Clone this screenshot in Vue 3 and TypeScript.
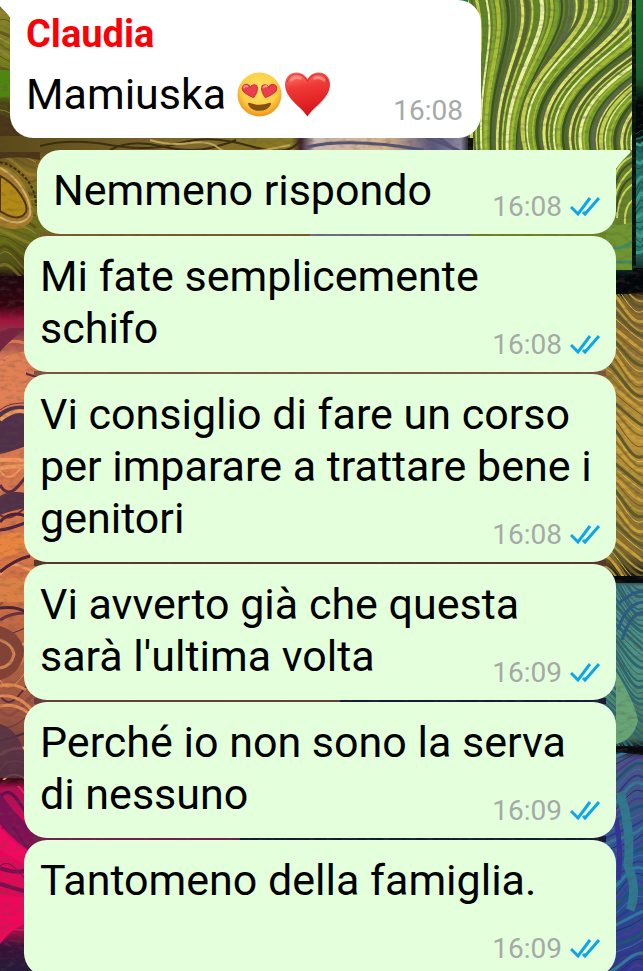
<script setup lang="ts">
interface Message {
  id: number
  text: string
  time: string
  first?: boolean
  long?: boolean
}

interface Stroke {
  d: string
  color: string
  width: number
}

const messages: Message[] = [
  { id: 1, text: 'Nemmeno rispondo', time: '16:08', first: true },
  { id: 2, text: 'Mi fate semplicemente schifo', time: '16:08' },
  { id: 3, text: 'Vi consiglio di fare un corso per imparare a trattare bene i genitori', time: '16:08' },
  { id: 4, text: "Vi avverto già che questa sarà l'ultima volta", time: '16:09' },
  { id: 5, text: 'Perché io non sono la serva di nessuno', time: '16:09' },
  { id: 6, text: 'Tantomeno della famiglia.', time: '16:09', long: true },
]

// Lines of the marbled paper that fan out from the top edge.
function fan(): Stroke[] {
  const colors = ['#4f6a2c', '#a9bd35', '#5d8426', '#dfe66a', '#3c5122', '#7fa22c', '#c6d050', '#5b6b4a', '#76a02b', '#eef0a0', '#54662f']
  const lines: Stroke[] = []
  for (let i = 0; i < 90; i++) {
    const top = 455 + i * 5
    const end = Math.round(474 + (top - 480) * 0.46)
    const pull = i > 24 ? 34 : 10
    lines.push({
      d: `M${top} -6C${top + 14} 42 ${end - pull + 10} 74 ${end + 6} 158`,
      color: colors[(i * 7) % colors.length],
      width: 2 + (i % 3),
    })
  }
  return lines
}

// Wavy veins that cross a block of paper from side to side.
function veins(x: number, y: number, w: number, h: number, step: number, slope: number, colors: string[]): Stroke[] {
  const lines: Stroke[] = []
  let i = 0
  for (let at = -Math.abs(slope); at < h + Math.abs(slope); at += step) {
    const a = y + at
    const bend = Math.round(Math.sin(i * 0.45) * step * 2)
    lines.push({
      d: `M${x} ${a}C${x + w / 3} ${a - bend} ${x + (w * 2) / 3} ${a + bend + slope} ${x + w} ${a + slope}`,
      color: colors[(i * 5) % colors.length],
      width: 1 + (i % 3),
    })
    i++
  }
  return lines
}

const fanLines = fan()
const gold = veins(0, 0, 36, 270, 6, 16, ['#3d3515', '#a08a35', '#5a5a1a', '#c2a850', '#4a3a14', '#6b7a1e'])
const orange = veins(0, 334, 50, 440, 15, -14, ['#4b2440', '#ee9560', '#6a2f42', '#d8794c', '#8e4a45', '#f0a06c', '#5a2a45'])
const magenta = veins(0, 790, 50, 150, 17, 26, ['#8a0a55', '#ff1468', '#5e124f', '#c90762'])
const straw = veins(600, 296, 43, 280, 5, 34, ['#6d5620', '#c9a03a', '#8d702a', '#e2b84c', '#5f5a28', '#b2963e'])
const teal = veins(600, 584, 43, 160, 6, 40, ['#2d6670', '#78b7a0', '#245060', '#5b9c80', '#8fc9b0'])
const blue = veins(600, 752, 43, 220, 7, -22, ['#1f2a6e', '#2f7ba0', '#283a90', '#3a6fae', '#1c5478', '#4338a0'])
const emerald = veins(633, 140, 10, 122, 6, -5, ['#0d4d4a', '#3a9c8c', '#15675c'])
</script>

<template>
  <main class="chat">
    <svg class="wallpaper" viewBox="0 0 643 971" preserveAspectRatio="xMidYMid slice" aria-hidden="true">
      <defs>
        <clipPath id="fan-area"><rect x="468" y="0" width="164" height="240" /></clipPath>
        <clipPath id="gold-area"><rect x="0" y="0" width="300" height="276" /></clipPath>
        <clipPath id="orange-area"><rect x="0" y="328" width="300" height="452" /></clipPath>
        <clipPath id="magenta-area"><rect x="0" y="786" width="300" height="160" /></clipPath>
        <clipPath id="straw-area"><rect x="560" y="294" width="83" height="283" /></clipPath>
        <clipPath id="teal-area"><rect x="560" y="584" width="83" height="162" /></clipPath>
        <clipPath id="blue-area"><rect x="560" y="752" width="83" height="219" /></clipPath>
        <linearGradient id="left-tone" x1="0" y1="0" x2="0" y2="971" gradientUnits="userSpaceOnUse">
          <stop offset="0" stop-color="#8d8030" />
          <stop offset="0.07" stop-color="#77801e" />
          <stop offset="0.09" stop-color="#4f7a10" />
          <stop offset="0.11" stop-color="#4a4512" />
          <stop offset="0.14" stop-color="#52401a" />
          <stop offset="0.18" stop-color="#8a6e20" />
          <stop offset="0.24" stop-color="#6b7018" />
          <stop offset="0.275" stop-color="#4c4a12" />
          <stop offset="0.285" stop-color="#1d0710" />
          <stop offset="0.315" stop-color="#35040f" />
          <stop offset="0.33" stop-color="#a3123f" />
          <stop offset="0.345" stop-color="#8d3a45" />
          <stop offset="0.37" stop-color="#df7d58" />
          <stop offset="0.6" stop-color="#d57245" />
          <stop offset="0.74" stop-color="#9b5440" />
          <stop offset="0.79" stop-color="#5f2d38" />
          <stop offset="0.804" stop-color="#3c0816" />
          <stop offset="0.812" stop-color="#b50b52" />
          <stop offset="0.87" stop-color="#e3085c" />
          <stop offset="0.95" stop-color="#e00850" />
          <stop offset="0.975" stop-color="#3a1038" />
          <stop offset="1" stop-color="#241b38" />
        </linearGradient>
        <linearGradient id="right-tone" x1="0" y1="0" x2="0" y2="971" gradientUnits="userSpaceOnUse">
          <stop offset="0" stop-color="#1b7a30" />
          <stop offset="0.08" stop-color="#14602c" />
          <stop offset="0.105" stop-color="#020807" />
          <stop offset="0.14" stop-color="#020807" />
          <stop offset="0.155" stop-color="#1d6b62" />
          <stop offset="0.25" stop-color="#2f8d7c" />
          <stop offset="0.275" stop-color="#0f3330" />
          <stop offset="0.285" stop-color="#050a0c" />
          <stop offset="0.3" stop-color="#171106" />
          <stop offset="0.31" stop-color="#7a6030" />
          <stop offset="0.45" stop-color="#c09538" />
          <stop offset="0.57" stop-color="#7d6c30" />
          <stop offset="0.596" stop-color="#0b0d0d" />
          <stop offset="0.604" stop-color="#4d8a8a" />
          <stop offset="0.7" stop-color="#4f9480" />
          <stop offset="0.76" stop-color="#427058" />
          <stop offset="0.77" stop-color="#050914" />
          <stop offset="0.782" stop-color="#4a5582" />
          <stop offset="0.9" stop-color="#28549a" />
          <stop offset="1" stop-color="#30348c" />
        </linearGradient>
        <linearGradient id="seam-tone" x1="0" y1="0" x2="1" y2="0">
          <stop offset="0" stop-color="#5b4a18" />
          <stop offset="0.4" stop-color="#7e6a2c" />
          <stop offset="0.62" stop-color="#8a7a20" />
          <stop offset="0.64" stop-color="#3a1c30" />
          <stop offset="0.67" stop-color="#c9b7b0" />
          <stop offset="0.82" stop-color="#d8b48c" />
          <stop offset="0.92" stop-color="#5b5880" />
          <stop offset="0.98" stop-color="#8b86a0" />
          <stop offset="1" stop-color="#111" />
        </linearGradient>
        <filter id="grain" x="0" y="0" width="100%" height="100%">
          <feTurbulence type="fractalNoise" baseFrequency="0.12 0.25" numOctaves="3" seed="8" />
          <feColorMatrix values="0 0 0 0 0.1  0 0 0 0 0.08  0 0 0 0 0.05  0 0 3 0 -1.4" />
        </filter>
      </defs>

      <rect width="330" height="971" fill="url(#left-tone)" />
      <rect x="330" width="313" height="971" fill="url(#right-tone)" />

      <g clip-path="url(#gold-area)" fill="none">
        <path v-for="(s, i) in gold" :key="i" :d="s.d" :stroke="s.color" :stroke-width="s.width" opacity="0.55" />
        <path d="M0 70H14V97H0Z" fill="#4f8610" />
        <path d="M0 114Q22 122 40 146L40 160Q20 155 0 159Z" fill="#4a3518" />
        <path d="M0 166C18 170 33 192 33 218C25 232 10 230 0 226Z" fill="#a67b2b" />
        <path d="M0 176C16 184 29 204 26 212C20 222 8 216 0 211Z" fill="#b38a14" stroke="#4c3410" stroke-width="2" />
        <path d="M0 168C20 178 32 202 30 215C23 227 8 222 0 217" stroke="#d2b468" stroke-width="2" />
        <path d="M0 162C22 168 36 186 36 206" stroke="#3d2b12" stroke-width="2" stroke-dasharray="3 2" />
      </g>

      <g clip-path="url(#orange-area)" fill="none">
        <path v-for="(s, i) in orange" :key="i" :d="s.d" :stroke="s.color" :stroke-width="s.width" />
        <path d="M0 332L24 322V330Q8 342 0 352Z" fill="#762340" />
        <path d="M0 368Q12 350 26 352V396Q12 402 0 404Z" fill="#e28055" />
        <path d="M0 412Q12 404 26 406V446Q10 452 0 454Z" fill="#503049" />
        <path d="M0 420Q14 408 26 412M0 460H26M0 468Q14 465 26 467" stroke="#f09a5e" stroke-width="4" />
        <path d="M0 496Q10 490 26 493V508Q10 511 0 515Z" fill="#513046" />
        <path d="M0 522Q10 510 26 516M0 572Q14 560 30 556M0 608Q16 606 26 612" stroke="#4d2134" stroke-width="3" />
        <path d="M0 536Q14 530 26 534V550Q10 556 0 558Z" fill="#ea8540" />
        <path d="M0 578H26V602H0Z" fill="#dc8145" />
        <path d="M0 626Q20 632 24 650Q22 674 0 680Z" fill="#844236" />
        <path d="M0 640Q12 644 14 654Q12 666 0 668" stroke="#d28150" stroke-width="3" />
        <path d="M0 686Q14 682 26 690M0 696Q18 694 32 710M0 706Q22 702 36 722" stroke="#e28a50" stroke-width="3" />
        <path d="M0 724Q20 730 26 760V778H0Z" fill="#563145" opacity="0.85" />
      </g>

      <g clip-path="url(#magenta-area)" fill="none">
        <path v-for="(s, i) in magenta" :key="i" :d="s.d" :stroke="s.color" :stroke-width="s.width" />
        <path d="M0 792Q12 812 40 836V858Q14 842 0 824Z" fill="#6a1254" opacity="0.8" />
        <path d="M0 826Q14 846 28 850V866Q10 856 0 850Z" fill="#f3085f" />
        <path d="M0 868Q16 874 28 870M0 884Q12 888 28 892" stroke="#79104d" stroke-width="4" />
        <path d="M0 894Q16 898 28 896V922Q10 930 0 944Z" fill="#ee075a" />
      </g>

      <rect x="0" y="136" width="470" height="16" fill="url(#seam-tone)" />
      <path
        d="M40 146Q70 138 110 145T180 143T250 146T300 140M110 150Q130 139 160 146T210 148T236 140"
        fill="none" stroke="#3b2d12" stroke-width="2"
      />
      <path d="M150 140Q170 146 190 143T220 149T290 145" fill="none" stroke="#c0a65a" stroke-width="2" />
      <path d="M306 147Q350 137 424 150M426 138Q444 144 460 151M438 137L454 149" fill="none" stroke="#545478" stroke-width="3" />

      <g clip-path="url(#fan-area)" fill="none">
        <rect x="468" width="164" height="240" fill="#64802c" />
        <path v-for="(s, i) in fanLines" :key="i" :d="s.d" :stroke="s.color" :stroke-width="s.width" />
        <path d="M466 138H473V150H466Z" fill="#0c0e0a" />
        <path d="M632 150Q614 158 612 240H632Z" fill="#65812a" />
        <path d="M633 156Q614 164 612 190M633 168Q618 180 614 200M633 184Q618 194 617 218M633 200Q624 206 625 224" stroke="#cbd65a" stroke-width="2" />
        <path d="M633 162Q616 170 613 196M633 177Q618 184 616 212" stroke="#3e5120" stroke-width="2" />
      </g>
      <path d="M600 222Q618 228 632 222V270H600Z" fill="#6f9630" />
      <path d="M608 248Q622 250 632 242M604 262H634" fill="none" stroke="#3f8d66" stroke-width="3" />

      <g fill="none">
        <path v-for="(s, i) in emerald" :key="i" :d="s.d" :stroke="s.color" :stroke-width="s.width" />
        <path d="M634 0V266" stroke="#06130b" stroke-width="4" />
        <path d="M630 0V40" stroke="#c5d879" stroke-width="1" />
      </g>
      <path d="M616 284Q632 278 634 268H643V292Q628 292 616 298Z" fill="#03060a" />

      <g clip-path="url(#straw-area)" fill="none">
        <path v-for="(s, i) in straw" :key="i" :d="s.d" :stroke="s.color" :stroke-width="s.width" />
      </g>
      <g clip-path="url(#teal-area)" fill="none">
        <path v-for="(s, i) in teal" :key="i" :d="s.d" :stroke="s.color" :stroke-width="s.width" />
        <path d="M616 672Q634 700 638 720Q634 740 616 744Z" fill="#67a577" />
        <path d="M618 604Q634 590 643 592M618 630Q626 604 643 602M622 640Q630 614 643 612" stroke="#2b5b85" stroke-width="3" />
      </g>
      <g clip-path="url(#blue-area)" fill="none">
        <path v-for="(s, i) in blue" :key="i" :d="s.d" :stroke="s.color" :stroke-width="s.width" />
        <path d="M620 792Q632 830 628 866Q638 890 630 910" stroke="#2f7890" stroke-width="9" />
        <path d="M616 818Q622 850 618 880" stroke="#32309a" stroke-width="5" />
      </g>
      <path d="M600 576H643V583H600ZM600 745L643 748V755L600 750Z" fill="#06090d" />

      <path d="M40 232H310V239H40Z" fill="#7d5a28" />
      <path d="M310 232H470V239H310Z" fill="#6f6a86" />
      <path d="M470 232H606V239H470Z" fill="#6f8426" />
      <path d="M34 371H606V376H34Z" fill="#7d5540" />
      <path d="M34 560H606V566H34Z" fill="#59352d" />
      <path d="M34 698H340V704H34Z" fill="#693c3e" />
      <path d="M340 698H606V704H340ZM240 836H606V842H240Z" fill="#181a35" />
      <path d="M34 836H240V842H34Z" fill="#70204b" />
      <rect width="643" height="971" filter="url(#grain)" opacity="0.3" />
    </svg>

    <article class="bubble received">
      <svg class="tail tail-left" viewBox="0 0 16 20" aria-hidden="true"><path d="M0 3Q0 0 3 0H16V20Q9 10 0 3Z" fill="#fff" /></svg>
      <h2 class="sender">Claudia</h2>
      <p class="text">
        Mamiuska
        <span class="emojis">
          <svg class="emoji" viewBox="0 0 44 44" role="img" aria-label="Faccina con occhi a cuore">
            <defs>
              <radialGradient id="face" cx="0.5" cy="0.38" r="0.62">
                <stop offset="0" stop-color="#ffe568" />
                <stop offset="0.65" stop-color="#fdce45" />
                <stop offset="1" stop-color="#ec9418" />
              </radialGradient>
            </defs>
            <circle cx="22" cy="22" r="21.5" fill="url(#face)" />
            <path d="M12 30Q22 34 32 30Q34 30 33 32Q30 38 22 38Q14 38 11 32Q10 30 12 30Z" fill="#83500e" />
            <path d="M16 25C11 23 5 20 5 16C6 11 11 11 13 15C15 11 20 12 20 16C20 19 18 23 16 25Z" fill="#e9404b" stroke="#d5343f" stroke-width="1" />
            <path d="M28 25C26 23 24 19 24 16C24 12 29 11 31 15C33 11 38 11 39 16C39 20 33 23 28 25Z" fill="#e9404b" stroke="#d5343f" stroke-width="1" />
            <path d="M7 15Q8 13 10 14M26 15Q27 13 29 14" fill="none" stroke="#ff9a94" stroke-width="2" stroke-linecap="round" />
          </svg>
          <svg class="emoji" viewBox="0 0 44 44" role="img" aria-label="Cuore rosso">
            <defs>
              <linearGradient id="heart" x1="0.4" y1="0" x2="0.6" y2="1">
                <stop offset="0" stop-color="#ff7468" />
                <stop offset="0.3" stop-color="#f03a37" />
                <stop offset="1" stop-color="#d41116" />
              </linearGradient>
            </defs>
            <path d="M22 43.500C16 34 0 26 0 12C0 5 5 0.500 11 0.500C16 0.500 20 3 22 7C24 3 28 0.500 33 0.500C39 0.500 44 5 44 12C44 26 28 34 22 43.500Z" fill="url(#heart)" />
            <path d="M2 10Q4 2 11 2Q18 2 22 9Q26 2 33 2Q40 2 42 10" fill="none" stroke="#c9242b" stroke-width="1" opacity="0.7" />
            <path d="M6 8Q10 4 15 6M29 6Q34 4 38 8" fill="none" stroke="#ff9d92" stroke-width="3" stroke-linecap="round" opacity="0.7" />
          </svg>
        </span>
      </p>
      <footer class="meta"><time>16:08</time></footer>
    </article>

    <article v-for="m in messages" :key="m.id" class="bubble sent" :class="{ first: m.first, long: m.long }">
      <svg v-if="m.first" class="tail tail-right" viewBox="0 0 16 20" aria-hidden="true"><path d="M0 0H13Q17 0 15 3Q7 10 0 20Z" fill="#e4ffdb" /></svg>
      <p class="text">{{ m.text }}</p>
      <footer class="meta">
        <time>{{ m.time }}</time>
        <svg class="ticks" viewBox="0 0 30 20" role="img" aria-label="Letto">
          <path d="M1 10L8 17L20 1M13 15L15 17L29 1" fill="none" stroke="#0fa5e6" stroke-width="3" />
        </svg>
      </footer>
    </article>
  </main>
</template>

<style>
body {
  margin: 0;
}
</style>

<style scoped>
.chat {
  position: relative;
  display: flex;
  flex-direction: column;
  gap: 2px;
  box-sizing: border-box;
  height: 100vh;
  padding: 0 27px 0 10px;
  overflow: hidden;
  font-family: Roboto, "Liberation Sans", sans-serif;
  color: #000;
}

.wallpaper {
  position: absolute;
  inset: 0;
  width: 100%;
  height: 100%;
}

.bubble {
  position: relative;
  flex: none;
  box-sizing: border-box;
  padding: 14px 16px 18px;
  border-radius: 23px;
}

.received {
  align-self: flex-start;
  width: calc(100% - 135px);
  margin-bottom: 10px;
  padding-top: 12px;
  border-top-left-radius: 0;
  background: #fff;
}

.sent {
  margin-left: 14px;
  background: #e4ffdb;
}

.sent.first {
  margin-left: 27px;
  border-top-right-radius: 0;
}

.sent.long {
  padding-bottom: 70px;
}

.sender {
  margin: 0;
  font-size: 38px;
  font-weight: 700;
  line-height: 44px;
  color: #fb0007;
}

.text {
  margin: 0;
  font-size: 43px;
  line-height: 52px;
}

.received .text {
  padding-top: 12px;
}

.emojis {
  display: inline-flex;
  gap: 3px;
  vertical-align: -8px;
}

.emoji {
  width: 45px;
  height: 45px;
}

.meta {
  position: absolute;
  right: 16px;
  bottom: 10px;
  display: flex;
  align-items: center;
  gap: 8px;
  font-size: 28px;
  line-height: 34px;
  color: #a5aaa9;
}

.received .meta {
  right: 18px;
}

.ticks {
  width: 30px;
  height: 20px;
}

.tail {
  position: absolute;
  top: 0;
  width: 16px;
  height: 20px;
}

.tail-left {
  left: -14px;
}

.tail-right {
  right: -15px;
}
</style>
